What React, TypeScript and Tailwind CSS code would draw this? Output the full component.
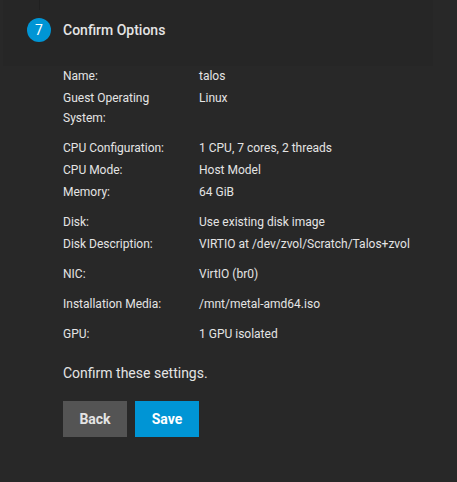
const groups: [string, string][][] = [
  [
    ["Name:", "talos"],
    ["Guest Operating System:", "Linux"],
  ],
  [
    ["CPU Configuration:", "1 CPU, 7 cores, 2 threads"],
    ["CPU Mode:", "Host Model"],
    ["Memory:", "64 GiB"],
  ],
  [
    ["Disk:", "Use existing disk image"],
    ["Disk Description:", "VIRTIO at /dev/zvol/Scratch/Talos+zvol"],
  ],
  [["NIC:", "VirtIO (br0)"]],
  [["Installation Media:", "/mnt/metal-amd64.iso"]],
  [["GPU:", "1 GPU isolated"]],
];

export default function App() {
  return (
    <main className="min-h-screen bg-[#282828] font-['Roboto',sans-serif] text-[#e4e4e4]">
      <header className="mr-6 ml-[3px] flex h-[66px] flex-col bg-[#262626] pl-6">
        <div className="ml-3 h-[10px] w-px bg-[#202020]" />
        <div className="mt-2 flex items-center gap-3">
          <span className="flex size-6 items-center justify-center rounded-full bg-[#0095d5] text-sm text-white">
            7
          </span>
          <h1 className="text-sm font-medium">Confirm Options</h1>
        </div>
      </header>
      <section className="pr-6 pl-[63px]">
        <div className="flex flex-col gap-[10px] text-xs leading-5">
          {groups.map((rows) => (
            <dl key={rows[0][0]} className="flex flex-col gap-[2px]">
              {rows.map(([label, value]) => (
                <div key={label} className="flex">
                  <dt className="w-[136px] shrink-0 pr-4">{label}</dt>
                  <dd className="min-w-0">{value}</dd>
                </div>
              ))}
            </dl>
          ))}
        </div>
        <p className="mt-[19px] text-sm leading-5">Confirm these settings.</p>
        <div className="mt-[18px] flex gap-2 pb-10">
          <button type="button" className="h-9 w-16 bg-[#545454] text-sm font-bold">
            Back
          </button>
          <button type="button" className="h-9 w-16 bg-[#0095d5] text-sm font-bold text-white">
            Save
          </button>
        </div>
      </section>
    </main>
  );
}
